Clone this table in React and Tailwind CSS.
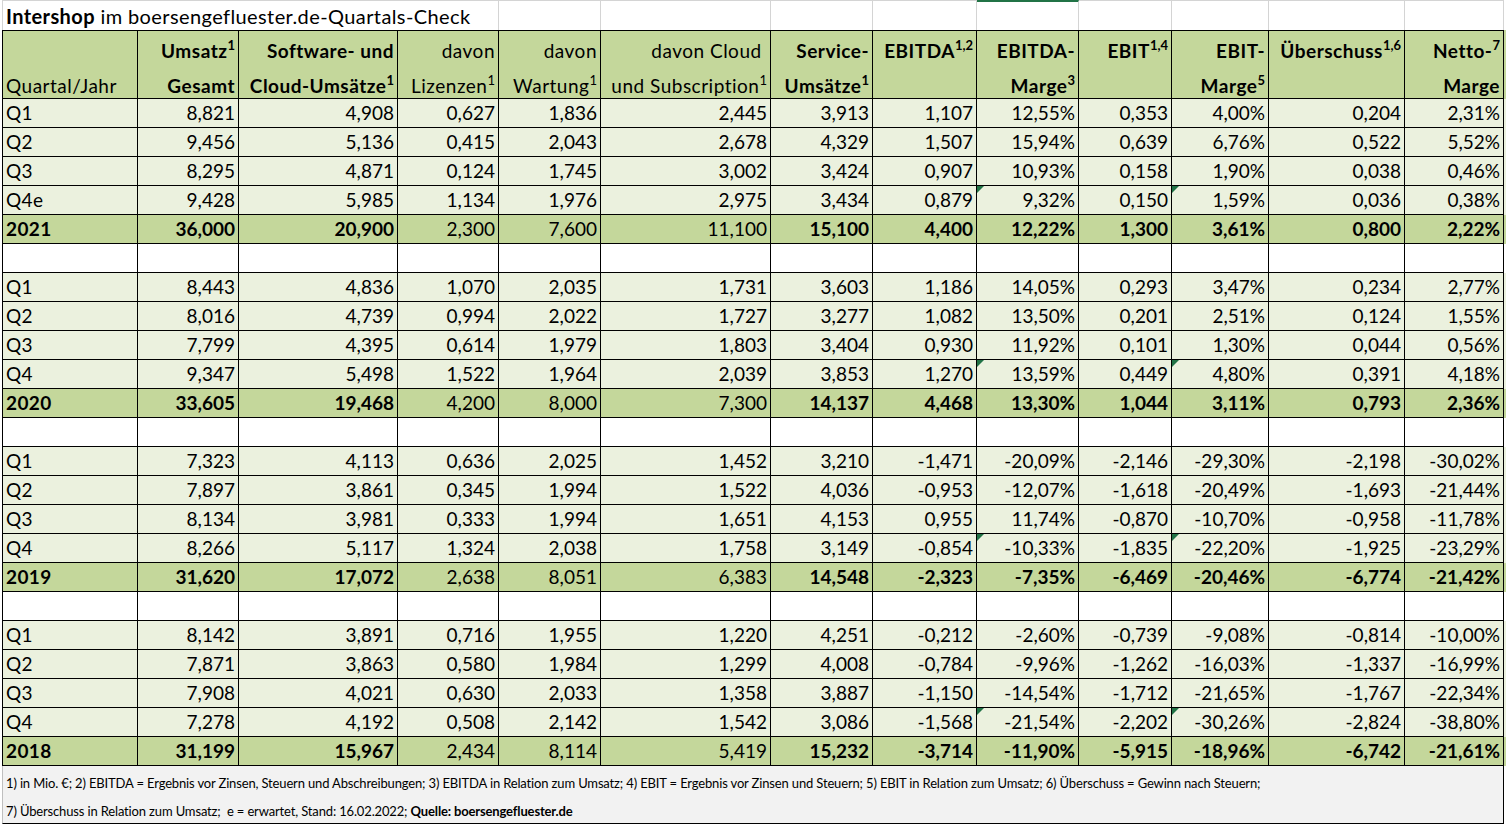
import React from "react";

// column template shared by every row of the sheet
const cols =
  "grid grid-cols-[136px_101px_159px_101px_102px_170px_102px_104px_102px_93px_97px_136px_99px]";

// header labels: [text, superscript]
const headers = [
  { l1: null, l2: ["Quartal/Jahr"], bold: false, left: true },
  { l1: ["Umsatz", "1"], l2: ["Gesamt"], bold: true },
  { l1: ["Software- und"], l2: ["Cloud-Umsätze", "1"], bold: true },
  { l1: ["davon"], l2: ["Lizenzen", "1"], bold: false },
  { l1: ["davon"], l2: ["Wartung", "1"], bold: false },
  { l1: ["davon Cloud\u00a0"], l2: ["und Subscription", "1"], bold: false },
  { l1: ["Service-"], l2: ["Umsätze", "1"], bold: true },
  { l1: ["EBITDA", "1,2"], l2: null, bold: true },
  { l1: ["EBITDA-"], l2: ["Marge", "3"], bold: true },
  { l1: ["EBIT", "1,4"], l2: null, bold: true },
  { l1: ["EBIT-"], l2: ["Marge", "5"], bold: true },
  { l1: ["Überschuss", "1,6"], l2: null, bold: true },
  { l1: ["Netto-", "7"], l2: ["Marge"], bold: true },
];

const groups = [
  {
    rows: [
      ["Q1", "8,821", "4,908", "0,627", "1,836", "2,445", "3,913", "1,107", "12,55%", "0,353", "4,00%", "0,204", "2,31%"],
      ["Q2", "9,456", "5,136", "0,415", "2,043", "2,678", "4,329", "1,507", "15,94%", "0,639", "6,76%", "0,522", "5,52%"],
      ["Q3", "8,295", "4,871", "0,124", "1,745", "3,002", "3,424", "0,907", "10,93%", "0,158", "1,90%", "0,038", "0,46%"],
      ["Q4e", "9,428", "5,985", "1,134", "1,976", "2,975", "3,434", "0,879", "9,32%", "0,150", "1,59%", "0,036", "0,38%"],
    ],
    total: ["2021", "36,000", "20,900", "2,300", "7,600", "11,100", "15,100", "4,400", "12,22%", "1,300", "3,61%", "0,800", "2,22%"],
  },
  {
    rows: [
      ["Q1", "8,443", "4,836", "1,070", "2,035", "1,731", "3,603", "1,186", "14,05%", "0,293", "3,47%", "0,234", "2,77%"],
      ["Q2", "8,016", "4,739", "0,994", "2,022", "1,727", "3,277", "1,082", "13,50%", "0,201", "2,51%", "0,124", "1,55%"],
      ["Q3", "7,799", "4,395", "0,614", "1,979", "1,803", "3,404", "0,930", "11,92%", "0,101", "1,30%", "0,044", "0,56%"],
      ["Q4", "9,347", "5,498", "1,522", "1,964", "2,039", "3,853", "1,270", "13,59%", "0,449", "4,80%", "0,391", "4,18%"],
    ],
    total: ["2020", "33,605", "19,468", "4,200", "8,000", "7,300", "14,137", "4,468", "13,30%", "1,044", "3,11%", "0,793", "2,36%"],
  },
  {
    rows: [
      ["Q1", "7,323", "4,113", "0,636", "2,025", "1,452", "3,210", "-1,471", "-20,09%", "-2,146", "-29,30%", "-2,198", "-30,02%"],
      ["Q2", "7,897", "3,861", "0,345", "1,994", "1,522", "4,036", "-0,953", "-12,07%", "-1,618", "-20,49%", "-1,693", "-21,44%"],
      ["Q3", "8,134", "3,981", "0,333", "1,994", "1,651", "4,153", "0,955", "11,74%", "-0,870", "-10,70%", "-0,958", "-11,78%"],
      ["Q4", "8,266", "5,117", "1,324", "2,038", "1,758", "3,149", "-0,854", "-10,33%", "-1,835", "-22,20%", "-1,925", "-23,29%"],
    ],
    total: ["2019", "31,620", "17,072", "2,638", "8,051", "6,383", "14,548", "-2,323", "-7,35%", "-6,469", "-20,46%", "-6,774", "-21,42%"],
  },
  {
    rows: [
      ["Q1", "8,142", "3,891", "0,716", "1,955", "1,220", "4,251", "-0,212", "-2,60%", "-0,739", "-9,08%", "-0,814", "-10,00%"],
      ["Q2", "7,871", "3,863", "0,580", "1,984", "1,299", "4,008", "-0,784", "-9,96%", "-1,262", "-16,03%", "-1,337", "-16,99%"],
      ["Q3", "7,908", "4,021", "0,630", "2,033", "1,358", "3,887", "-1,150", "-14,54%", "-1,712", "-21,65%", "-1,767", "-22,34%"],
      ["Q4", "7,278", "4,192", "0,508", "2,142", "1,542", "3,086", "-1,568", "-21,54%", "-2,202", "-30,26%", "-2,824", "-38,80%"],
    ],
    total: ["2018", "31,199", "15,967", "2,434", "8,114", "5,419", "15,232", "-3,714", "-11,90%", "-5,915", "-18,96%", "-6,742", "-21,61%"],
  },
];

// "davon" columns stay regular in the year rows
const plainInTotal = [3, 4, 5];

function Label({ part, bold }) {
  if (!part) return <div>&nbsp;</div>;
  return (
    <div className={bold ? "font-bold" : ""}>
      {part[0]}
      {part[1] && <sup className="text-[13px] -top-2 tracking-normal">{part[1]}</sup>}
    </div>
  );
}

// the little green error marker Excel draws in a cell corner
function Marker() {
  return (
    <svg className="absolute top-0 left-0" width="7" height="7" viewBox="0 0 7 7">
      <polygon points="0,0 7,0 0,7" fill="#217346" />
    </svg>
  );
}

function Row({ cells, kind }) {
  const bg = kind === "total" ? "bg-[#c4d79b]" : kind === "blank" ? "bg-white" : "bg-[#ebf1de]";
  const marked = kind === "row" && cells[0].startsWith("Q4");
  return (
    <div className={`${cols} ${bg}`}>
      {cells.map((c, i) => (
        <div
          key={i}
          className={`relative h-[29px] border-r border-b border-black px-[3px] leading-[28px] whitespace-nowrap ${
            i === 0 ? "border-l text-left tracking-[0.4px]" : "text-right"
          } ${kind === "total" && !plainInTotal.includes(i) ? "font-bold" : ""}`}
        >
          {marked && (i === 8 || i === 10) && <Marker />}
          {c}
        </div>
      ))}
    </div>
  );
}

export default function App() {
  const blank = Array(13).fill("");

  return (
    <div className="w-[1506px] h-[826px] bg-white text-black text-[19px] overflow-hidden [font-family:Lato,sans-serif]">
      {/* Title row with the faint sheet gridlines */}
      <div className="flex ml-[2px] h-[30px]">
        <div className="w-[497px] border-l border-r border-t border-[#d4d4d4] pl-[3px] text-[20px] tracking-[0.4px] leading-[30px] whitespace-nowrap">
          <span className="font-bold">Intershop</span> im boersengefluester.de-Quartals-Check
        </div>
        <div className="w-[102px] border-r border-t border-[#d4d4d4]" />
        <div className="w-[170px] border-r border-t border-[#d4d4d4]" />
        <div className="w-[102px] border-r border-t border-[#d4d4d4]" />
        <div className="w-[104px] border-r border-t border-[#d4d4d4]" />
        <div className="w-[102px] border-r border-[#d4d4d4] border-t-2 border-t-[#217346]" />
        <div className="w-[93px] border-r border-t border-[#d4d4d4]" />
        <div className="w-[97px] border-r border-t border-[#d4d4d4]" />
        <div className="w-[136px] border-r border-t border-[#d4d4d4]" />
        <div className="w-[99px] border-r border-t border-[#d4d4d4]" />
      </div>

      <div className="ml-[2px]">
        {/* Header */}
        <div className={`${cols} bg-[#c4d79b]`}>
          {headers.map((h, i) => (
            <div
              key={i}
              className={`h-[69px] border-t border-r border-b border-black px-[3px] pt-[2px] leading-[35px] tracking-[0.5px] whitespace-nowrap ${
                i === 0 ? "border-l text-left" : "text-right"
              }`}
            >
              <Label part={h.l1} bold={h.bold} />
              <Label part={h.l2} bold={h.bold} />
            </div>
          ))}
        </div>

        {groups.map((g, gi) => (
          <React.Fragment key={gi}>
            {gi > 0 && <Row cells={blank} kind="blank" />}
            {g.rows.map((r, ri) => (
              <Row key={ri} cells={r} kind="row" />
            ))}
            <Row cells={g.total} kind="total" />
          </React.Fragment>
        ))}

        {/* Footnotes */}
        <div className="w-[1502px] h-[58px] bg-[#f2f2f2] border-l border-l-[#bfbfbf] border-r border-b border-black pl-[3px] pt-[3px] text-[13px] leading-[28px] tracking-[-0.15px] whitespace-nowrap">
          <div>
            1) in Mio. €; 2) EBITDA = Ergebnis vor Zinsen, Steuern und Abschreibungen; 3) EBITDA in Relation zum Umsatz; 4) EBIT = Ergebnis vor Zinsen und Steuern; 5) EBIT in Relation zum Umsatz; 6) Überschuss = Gewinn nach Steuern;
          </div>
          <div>
            7) Überschuss in Relation zum Umsatz;&nbsp; e = erwartet, Stand: 16.02.2022;{" "}
            <span className="font-bold">Quelle: boersengefluester.de</span>
          </div>
        </div>
      </div>
    </div>
  );
}
